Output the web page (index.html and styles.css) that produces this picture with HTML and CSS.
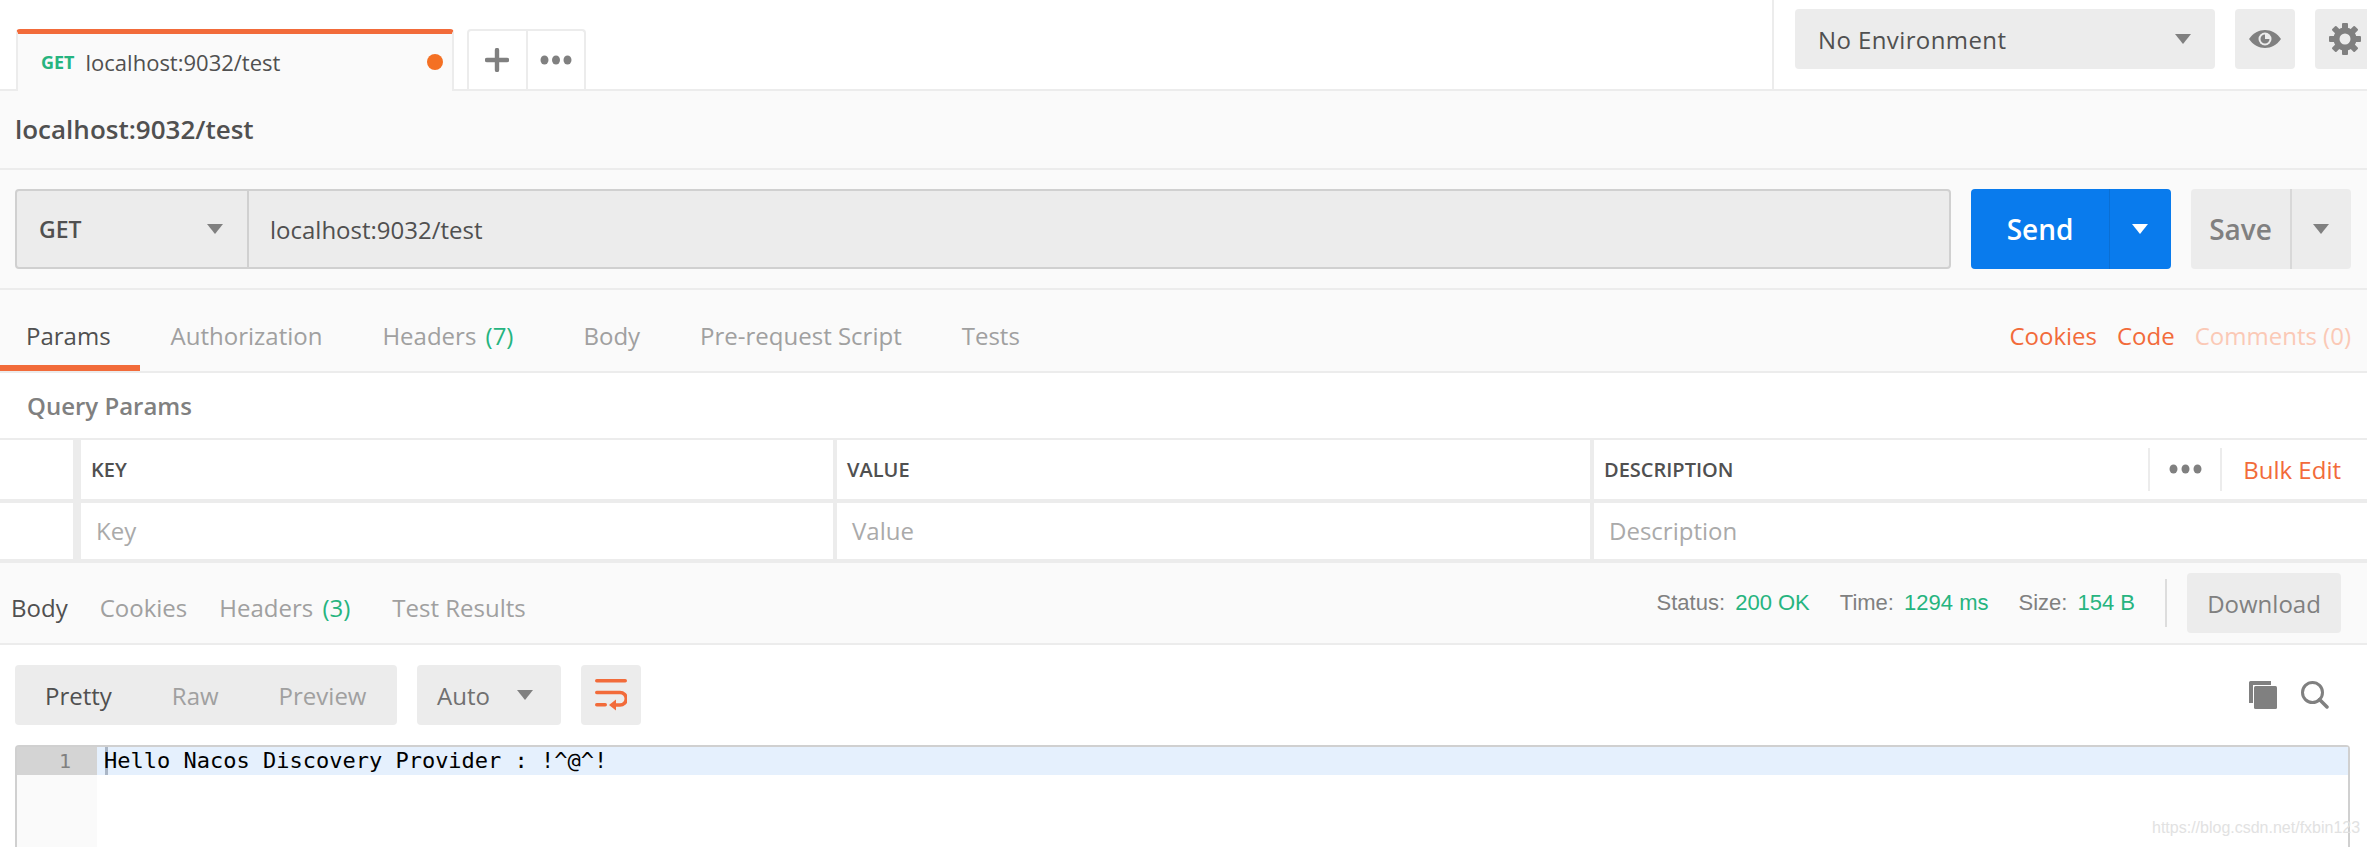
FILE: index.html
```html
<!DOCTYPE html>
<html lang="en">
<head>
<meta charset="utf-8">
<title>localhost:9032/test</title>
<link rel="stylesheet" href="styles.css">
</head>
<body>
<header class="topbar">
  <div class="tabstrip">
    <div class="req-tab">
      <span class="req-method">GET</span>
      <span class="req-name">localhost:9032/test</span>
      <span class="req-dot"></span>
    </div>
    <div class="tab-actions">
      <div class="tab-action">
        <svg width="24" height="24" viewBox="0 0 24 24"><path d="M9.800 2a2.200 2.200 0 0 1 4.400 0V9.800H22a2.200 2.200 0 0 1 0 4.400h-7.800V22a2.200 2.200 0 0 1-4.400 0v-7.800H2a2.200 2.200 0 0 1 0-4.400h7.800z" fill="#808080"/></svg>
      </div>
      <div class="tab-action">
        <svg width="32" height="12" viewBox="0 0 32 12"><g fill="#808080"><ellipse cx="4.500" cy="6" rx="4" ry="4.500"/><ellipse cx="16" cy="6" rx="4" ry="4.500"/><ellipse cx="27.500" cy="6" rx="4" ry="4.500"/></g></svg>
      </div>
    </div>
  </div>
  <div class="env">
    <div class="env-select">
      <span>No Environment</span>
      <span class="caret"></span>
    </div>
    <div class="env-btn">
      <svg width="32" height="18" viewBox="0 0 32 18"><path d="M0 9C4 3 10 0 16 0s12 3 16 9c-4 6-10 9-16 9S4 15 0 9z" fill="#808080"/><circle cx="16" cy="9" r="6.500" fill="#ececec"/><path d="M16 4.500a4.500 4.500 0 1 0 4.500 4.500H16z" fill="#808080"/></svg>
    </div>
    <div class="env-btn env-gear">
      <svg width="32" height="32" viewBox="0 0 32 32"><g fill="#808080"><rect x="13" y="0" width="6" height="32" rx="1"/><rect x="13" y="0" width="6" height="32" rx="1" transform="rotate(45 16 16)"/><rect x="13" y="0" width="6" height="32" rx="1" transform="rotate(90 16 16)"/><rect x="13" y="0" width="6" height="32" rx="1" transform="rotate(135 16 16)"/></g><circle cx="16" cy="16" r="8.500" fill="none" stroke="#808080" stroke-width="6"/><circle cx="16" cy="16" r="5.500" fill="#ececec"/></svg>
    </div>
  </div>
</header>

<div class="title-row">localhost:9032/test</div>

<div class="url-row">
  <div class="url-box">
    <div class="url-method"><span>GET</span><span class="caret"></span></div>
    <div class="url-input">localhost:9032/test</div>
  </div>
  <div class="send">
    <span class="send-label">Send</span>
    <span class="send-more"><span class="caret caret-white"></span></span>
  </div>
  <div class="save">
    <span class="save-label">Save</span>
    <span class="save-more"><span class="caret"></span></span>
  </div>
</div>

<nav class="req-nav">
  <span class="nav-item nav-active">Params</span>
  <span class="nav-item">Authorization</span>
  <span class="nav-item">Headers <em class="count">(7)</em></span>
  <span class="nav-item">Body</span>
  <span class="nav-item">Pre-request Script</span>
  <span class="nav-item">Tests</span>
  <span class="nav-links">
    <span class="link">Cookies</span>
    <span class="link">Code</span>
    <span class="link link-faint">Comments (0)</span>
  </span>
</nav>

<section class="query">
  <div class="query-title">Query Params</div>
  <div class="qtable">
    <div class="cell cell-first head"></div>
    <div class="cell head">KEY</div>
    <div class="cell head">VALUE</div>
    <div class="cell cell-last head">
      <span>DESCRIPTION</span>
      <div class="head-tools">
        <span class="tool-dots"><svg width="33" height="12" viewBox="0 0 33 12"><g fill="#808080"><ellipse cx="4.500" cy="6" rx="4" ry="4.500"/><ellipse cx="16.500" cy="6" rx="4" ry="4.500"/><ellipse cx="28.500" cy="6" rx="4" ry="4.500"/></g></svg></span>
        <span class="link bulk">Bulk Edit</span>
      </div>
    </div>
    <div class="cell cell-first body"></div>
    <div class="cell body">Key</div>
    <div class="cell body">Value</div>
    <div class="cell cell-last body">Description</div>
  </div>
</section>

<nav class="res-nav">
  <span class="res-item nav-active">Body</span>
  <span class="res-item">Cookies</span>
  <span class="res-item">Headers <em class="count">(3)</em></span>
  <span class="res-item">Test Results</span>
  <div class="res-stats">
    <span class="stat">Status: <b>200 OK</b></span>
    <span class="stat">Time: <b>1294 ms</b></span>
    <span class="stat">Size: <b>154 B</b></span>
    <span class="stat-div"></span>
    <span class="download">Download</span>
  </div>
</nav>

<div class="toolbar">
  <div class="modes">
    <span class="mode mode-on">Pretty</span>
    <span class="mode">Raw</span>
    <span class="mode">Preview</span>
  </div>
  <div class="auto"><span>Auto</span><span class="caret"></span></div>
  <div class="wrap">
    <svg width="32" height="32" viewBox="0 0 32 32"><g fill="#f26b3a"><rect x="0" y="0" width="32" height="3.500" rx="1.750"/><rect x="0" y="24" width="12" height="3.500" rx="1.750"/><path d="M21 20.500v11L14 26z"/></g><path d="M1.750 13.500H25a6 6 0 0 1 0 12.500H18" fill="none" stroke="#f26b3a" stroke-width="3.500" stroke-linecap="round"/></svg>
  </div>
  <div class="tools">
    <svg width="28" height="28" viewBox="0 0 28 28"><path d="M1.500 0H22v4H4v18H0V1.500A1.500 1.500 0 0 1 1.500 0z" fill="#808080"/><rect x="5" y="5" width="23" height="23" rx="1.500" fill="#808080"/></svg>
    <svg width="28" height="28" viewBox="0 0 28 28"><circle cx="11.500" cy="11.500" r="10" fill="none" stroke="#808080" stroke-width="3"/><path d="M18.500 18.500L26 26" stroke="#808080" stroke-width="3.500" stroke-linecap="round"/></svg>
  </div>
</div>

<div class="editor-wrap">
  <div class="editor">
    <div class="gutter"><div class="gutter-line">1</div></div>
    <div class="code"><div class="code-line"><span class="cursor"></span>Hello Nacos Discovery Provider : !^@^!</div></div>
  </div>
  <div class="watermark">https://blog.csdn.net/fxbin123</div>
</div>
</body>
</html>
```

FILE: styles.css
```css
* { box-sizing: border-box; }
html, body { margin: 0; padding: 0; }
body {
  width: 2367px;
  height: 847px;
  overflow: hidden;
  background: #fff;
  font-family: "Open Sans", "Noto Sans", sans-serif;
  color: #505050;
}
em { font-style: normal; }

.caret {
  display: block;
  width: 0;
  height: 0;
  border-left: 8px solid transparent;
  border-right: 8px solid transparent;
  border-top: 10px solid #808080;
}
.caret-white { border-top-color: #fff; }

.topbar {
  height: 91px;
  display: flex;
  justify-content: space-between;
  background: #fff;
  border-bottom: 2px solid #ececec;
}
.tabstrip { display: flex; align-items: flex-end; padding-left: 16px; gap: 13px; }
.req-tab {
  width: 438px;
  height: 62px;
  margin-bottom: -2px;
  background: #fafafa;
  border-top: 5px solid #f26b3a;
  border-left: 2px solid #ececec;
  border-right: 2px solid #ececec;
  border-top-left-radius: 4px;
  border-top-right-radius: 4px;
  display: flex;
  align-items: center;
  padding: 0 9px 2px 23px;
}
.req-method { font-size: 18px; font-weight: 700; color: #26b47f; margin-right: 11px; }
.req-name { font-size: 22px; color: #505050; flex: 1; }
.req-dot { width: 16px; height: 16px; border-radius: 50%; background: #f47023; }
.tab-actions {
  width: 119px;
  height: 60px;
  display: flex;
  border: 2px solid #ececec;
  border-bottom: 0;
  border-radius: 4px 4px 0 0;
}
.tab-action { flex: 1; display: flex; align-items: center; justify-content: center; }
.tab-action + .tab-action { border-left: 2px solid #ececec; }

.env {
  width: 595px;
  display: flex;
  gap: 20px;
  padding: 9px 0 20px 21px;
  border-left: 2px solid #ececec;
  overflow: hidden;
}
.env-select {
  width: 420px;
  flex: none;
  background: #ececec;
  border-radius: 4px;
  display: flex;
  align-items: center;
  justify-content: space-between;
  padding: 0 24px 0 23px;
  font-size: 24px;
  letter-spacing: 0.4px;
  color: #505050;
}
.env-btn {
  width: 60px;
  flex: none;
  background: #ececec;
  border-radius: 4px;
  display: flex;
  align-items: center;
  justify-content: center;
}
.env-gear { margin-right: -8px; }

.title-row {
  height: 79px;
  display: flex;
  align-items: center;
  padding: 0 0 2px 15px;
  font-size: 26px;
  font-weight: 600;
  color: #505050;
  background: #fafafa;
  border-bottom: 2px solid #ececec;
}

.url-row {
  height: 120px;
  display: flex;
  padding: 19px 16px 19px 15px;
  gap: 20px;
  background: #fafafa;
  border-bottom: 2px solid #ececec;
}
.url-box {
  flex: 1;
  display: flex;
  background: #ececec;
  border: 2px solid #d0d0d0;
  border-radius: 4px;
}
.url-method {
  width: 232px;
  display: flex;
  align-items: center;
  justify-content: space-between;
  padding: 0 24px 0 22px;
  border-right: 2px solid #d0d0d0;
  font-size: 23px;
  font-weight: 600;
  color: #505050;
}
.url-input { display: flex; align-items: center; padding-left: 21px; font-size: 24px; color: #505050; }

.send, .save { display: flex; border-radius: 4px; font-size: 28px; font-weight: 600; }
.send { width: 200px; background: #097bed; color: #fff; }
.send-label { width: 138px; display: flex; align-items: center; justify-content: center; }
.send-more { flex: 1; display: flex; align-items: center; justify-content: center; border-left: 1px solid #0a6fd4; padding-right: 2px; }
.save { width: 160px; background: #ececec; color: #808080; }
.save-label { width: 99px; display: flex; align-items: center; justify-content: center; }
.save-more { flex: 1; display: flex; align-items: center; justify-content: center; border-left: 2px solid #d8d8d8; padding-right: 2px; }

.req-nav {
  height: 83px;
  display: flex;
  background: #fafafa;
  border-bottom: 2px solid #ececec;
  font-size: 24px;
  color: #a0a0a0;
}
.nav-item {
  display: flex;
  align-items: center;
  gap: 3px;
  padding: 16px 26px 0;
  margin-right: 8px;
  border-bottom: 6px solid transparent;
  white-space: pre;
}
.nav-item:nth-child(1) { padding-right: 29px; margin-right: 5px; }
.nav-item:nth-child(3) { margin-right: 18px; }
.nav-active { color: #505050; border-bottom-color: #f26b3a; }
.count { color: #26b47f; }
.nav-links { margin-left: auto; display: flex; align-items: center; gap: 20px; padding: 16px 16px 6px 0; }
.link { color: #f26b3a; font-size: 24px; }
.link-faint { color: #fbc9b6; }

.query { background: #fff; }
.query-title {
  height: 65px;
  display: flex;
  align-items: center;
  padding: 0 0 0 27px;
  font-size: 24px;
  font-weight: 600;
  color: #808080;
}
.qtable {
  display: grid;
  grid-template-columns: 81px 756px 757px 1fr;
  grid-template-rows: 63px 60px;
  border-top: 2px solid #ececec;
}
.cell {
  display: flex;
  align-items: center;
  border-right: 4px solid #ececec;
  border-bottom: 4px solid #ececec;
}
.cell-first { border-right-width: 8px; }
.cell-last { border-right: 0; }
.head { padding: 0 0 1px 10px; font-size: 20px; font-weight: 600; color: #505050; }
.body { padding: 0 0 1px 15px; font-size: 24px; color: #aaa; }
.head-tools { margin-left: auto; display: flex; align-items: center; }
.cell-last.head { padding-left: 10px; padding-right: 26px; }
.tool-dots {
  height: 43px;
  width: 74px;
  display: flex;
  align-items: center;
  justify-content: center;
  border-left: 2px solid #ececec;
  border-right: 2px solid #ececec;
}
.bulk { margin-left: 21px; font-weight: 400; }

.res-nav {
  height: 82px;
  display: flex;
  background: #fafafa;
  border-bottom: 2px solid #ececec;
  font-size: 24px;
  color: #a0a0a0;
}
.res-item {
  display: flex;
  align-items: center;
  gap: 3px;
  padding: 14px 16px 0;
  border-bottom: 6px solid transparent;
  white-space: pre;
}
.res-item.nav-active { padding: 14px 16px 0 11px; }
.res-item:nth-child(3) { margin-right: 10px; }
.res-stats {
  margin-left: auto;
  display: flex;
  align-items: center;
  padding: 0 26px 0 0;
  font-family: "Liberation Sans", Arial, sans-serif;
  font-size: 22px;
  color: #808080;
}
.stat { margin-right: 30px; }
.stat b { font-weight: 400; color: #26b47f; margin-left: 4px; }
.stat-div { width: 2px; height: 48px; background: #ddd; }
.download {
  margin-left: 20px;
  width: 154px;
  height: 60px;
  display: flex;
  align-items: center;
  justify-content: center;
  background: #ececec;
  border-radius: 4px;
  font-family: "Open Sans", sans-serif;
  font-size: 24px;
}

.toolbar {
  height: 100px;
  display: flex;
  align-items: flex-start;
  padding: 20px 38px 0 15px;
  gap: 20px;
  background: #fff;
}
.modes, .auto, .wrap { height: 60px; background: #ececec; border-radius: 4px; display: flex; align-items: center; font-size: 24px; }
.modes { width: 382px; padding-left: 30px; gap: 60px; color: #a0a0a0; }
.mode-on { color: #505050; }
.auto { width: 144px; padding: 0 28px 0 20px; justify-content: space-between; color: #707070; }
.wrap { width: 60px; justify-content: center; }
.tools { margin-left: auto; display: flex; gap: 24px; margin-top: 16px; }

.editor-wrap { position: relative; height: 102px; padding: 0 17px 0 15px; background: #fff; }
.editor {
  height: 102px;
  display: flex;
  border: 2px solid #d0d0d0;
  border-bottom: 0;
  border-radius: 4px 4px 0 0;
  background: #fff;
}
.gutter { width: 80px; background: #fafafa; }
.gutter-line {
  height: 28px;
  background: #d4d4d4;
  text-align: right;
  padding-right: 26px;
  font-family: "DejaVu Sans Mono", monospace;
  font-size: 20px;
  line-height: 28px;
  color: #808080;
}
.code { flex: 1; }
.code-line {
  height: 28px;
  display: flex;
  padding-left: 7px;
  background: #e5f0fd;
  font-family: "DejaVu Sans Mono", monospace;
  font-size: 22px;
  line-height: 27px;
  color: #000;
  white-space: pre;
  position: relative;
  z-index: 0;
}
.cursor { position: absolute; z-index: -1; left: 8px; top: 0; width: 3px; height: 28px; background: #aab6c6; }
.watermark {
  position: absolute;
  left: 2152px;
  top: 74px;
  font-family: "Liberation Sans", Arial, sans-serif;
  font-size: 16px;
  color: #e2e2e2;
  white-space: nowrap;
}
```
